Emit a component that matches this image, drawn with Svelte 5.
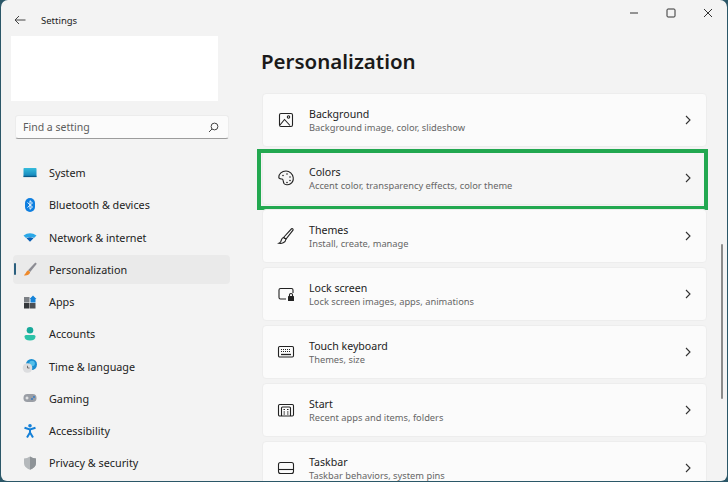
<script>
    const menu = [
        { id: "system", label: "System" },
        { id: "bluetooth", label: "Bluetooth & devices" },
        { id: "network", label: "Network & internet" },
        { id: "brush", label: "Personalization", active: true },
        { id: "apps", label: "Apps" },
        { id: "accounts", label: "Accounts" },
        { id: "time", label: "Time & language" },
        { id: "gaming", label: "Gaming" },
        { id: "access", label: "Accessibility" },
        { id: "privacy", label: "Privacy & security" }
    ];

    const cards = [
        { id: "background", title: "Background", sub: "Background image, color, slideshow" },
        { id: "colors", title: "Colors", sub: "Accent color, transparency effects, color theme", marked: true },
        { id: "themes", title: "Themes", sub: "Install, create, manage" },
        { id: "lock", title: "Lock screen", sub: "Lock screen images, apps, animations" },
        { id: "keyboard", title: "Touch keyboard", sub: "Themes, size" },
        { id: "start", title: "Start", sub: "Recent apps and items, folders" },
        { id: "taskbar", title: "Taskbar", sub: "Taskbar behaviors, system pins" }
    ];
</script>

<div class="ventana">
    <aside class="lateral">
        <div class="titulo">
            <svg class="atras" width="12" height="10" viewBox="0 0 12 10" fill="none" stroke="#444" stroke-width="1">
                <path d="M11.500 5H1M5 1 1 5l4 4" />
            </svg>
            <span>Settings</span>
        </div>
        <div class="perfil"></div>
        <div class="buscador">
            <span>Find a setting</span>
            <svg width="11" height="11" viewBox="0 0 11 11" fill="none" stroke="#444" stroke-width="1">
                <circle cx="6.500" cy="4.500" r="3.400" />
                <path d="M4 7 1 10" />
            </svg>
        </div>
        <nav class="menu">
            {#each menu as item}
                <div class="item" class:activo={item.active}>
                    <svg class="icono" width="16" height="16" viewBox="0 0 16 16">
                        <defs>
                            <linearGradient id="pantalla-{item.id}" x1="0" y1="0" x2="0" y2="1">
                                <stop offset="0" stop-color="#35bcdc" />
                                <stop offset="1" stop-color="#1180b8" />
                            </linearGradient>
                        </defs>
                        {#if item.id === "system"}
                            <rect x="1.500" y="3" width="13" height="9" rx="0.800" fill="url(#pantalla-{item.id})" />
                            <rect x="1.500" y="10.800" width="13" height="1.300" fill="#0b5a88" />
                        {:else if item.id === "bluetooth"}
                            <rect x="3" y="1" width="10" height="14" rx="5" fill="#0f7fe0" />
                            <path d="M5.500 5.500 10.500 10 8 12.300V3.700L10.500 6 5.500 10.500" fill="none" stroke="#fff" stroke-width="0.900" />
                        {:else if item.id === "network"}
                            <path d="M1.500 6.500Q8 2 14.500 6.500L12 9Q8 7 4 9Z" fill="#2aa8e8" />
                            <path d="M4.500 9.200Q8 7.500 11.500 9.200L8 12.800Z" fill="#0a5fb4" />
                        {:else if item.id === "brush"}
                            <path d="M6 9.300 13.300 1.500 14.800 2.800 8.200 11Z" fill="#8d8d94" />
                            <path d="M6 9.300 8.200 11.200C7.500 14 4 15 1.800 14.300 3.600 13.500 3.800 10.500 6 9.300Z" fill="#ee8a2c" />
                        {:else if item.id === "apps"}
                            <rect x="2" y="3" width="5.500" height="5.500" fill="#7c8085" />
                            <rect x="2" y="9" width="5.500" height="5.500" fill="#34373b" />
                            <rect x="8" y="9" width="5.500" height="5.500" fill="#4c5055" />
                            <path d="M11 1.500 14.500 5 13.500 5V8.500H8.500V5H7.500Z" fill="#1583d8" />
                        {:else if item.id === "accounts"}
                            <circle cx="8" cy="4.300" r="3.300" fill="#17a99a" />
                            <path d="M2.500 10.500Q2.500 9 4 9H12Q13.500 9 13.500 10.500 13.500 14.500 8 14.500T2.500 10.500Z" fill="#2cc2a8" />
                        {:else if item.id === "time"}
                            <circle cx="9.500" cy="6.500" r="5.500" fill="#1b8ed0" />
                            <circle cx="10" cy="5.500" r="2.800" fill="#54c0ea" />
                            <circle cx="5.500" cy="10" r="4.800" fill="#dcdddf" />
                            <path d="M5.500 7.800V10H7.500" fill="none" stroke="#555" stroke-width="0.800" />
                        {:else if item.id === "gaming"}
                            <rect x="1.500" y="4" width="13" height="8" rx="3.800" fill="#9a9ea5" />
                            <path d="M3.500 8H6.500M5 6.500V9.500" stroke="#fff" stroke-width="0.900" />
                            <circle cx="10" cy="9" r="0.900" fill="#2a78c8" />
                            <circle cx="12" cy="7" r="0.900" fill="#2a78c8" />
                        {:else if item.id === "access"}
                            <circle cx="8" cy="2.800" r="1.800" fill="#1480d8" />
                            <path d="M2.500 4.700 8 6.500 13.500 4.700M8 6.500V9.500M8 9.500 5 14.500M8 9.500 11 14.500" fill="none" stroke="#1480d8" stroke-width="2" />
                        {:else}
                            <path d="M8 1.500Q11 3.500 14 3.500V8C14 11.500 11 13.700 8 14.700 5 13.700 2 11.500 2 8V3.500Q5 3.500 8 1.500Z" fill="#b4b8bb" />
                            <path d="M8 1.500Q11 3.500 14 3.500V8C14 11.500 11 13.700 8 14.700Z" fill="#8e9397" />
                        {/if}
                    </svg>
                    <span>{item.label}</span>
                </div>
            {/each}
        </nav>
    </aside>

    <main class="contenido">
        <div class="controles">
            <svg width="10" height="10" viewBox="0 0 10 10" fill="none" stroke="#333" stroke-width="1">
                <path d="M1 5H9" />
            </svg>
            <svg width="10" height="10" viewBox="0 0 10 10" fill="none" stroke="#333" stroke-width="1">
                <rect x="1" y="1" width="8" height="8" rx="1" />
            </svg>
            <svg width="10" height="10" viewBox="0 0 10 10" fill="none" stroke="#333" stroke-width="1">
                <path d="M1 1 9 9M9 1 1 9" />
            </svg>
        </div>
        <h1>Personalization</h1>
        <div class="lista">
            {#each cards as card}
                <div class="tarjeta" class:marcada={card.marked}>
                    <svg class="icono-tarjeta" width="18" height="18" viewBox="0 0 18 18" fill="none" stroke="#222" stroke-width="1.100">
                        {#if card.id === "background"}
                            <rect x="2.500" y="2.500" width="13" height="13" rx="1.500" />
                            <circle cx="11.500" cy="6" r="1.200" />
                            <path d="M3 14 7.500 8.500 13 14.500" />
                        {:else if card.id === "colors"}
                            <path d="M9 2C4.800 2 1.800 5 1.800 8.300 1.800 10.200 4 9.800 5.200 10 6.500 10.300 6 12.500 7 14.500 8 16 11.500 16.200 13.500 14.800 15.800 13.200 16.500 10.800 16.200 8.500 15.700 4.800 12.500 2 9 2Z" />
                            <circle cx="6" cy="6.500" r="0.800" fill="#222" stroke="none" />
                            <circle cx="10" cy="5" r="0.800" fill="#222" stroke="none" />
                            <circle cx="13" cy="8" r="0.800" fill="#222" stroke="none" />
                            <circle cx="13" cy="11.500" r="0.800" fill="#222" stroke="none" />
                            <circle cx="10" cy="13.500" r="0.800" fill="#222" stroke="none" />
                        {:else if card.id === "themes"}
                            <path d="M6.500 10.500 14.500 1.800C15.500 1.200 16.500 2 16 3.200L9 12Z" />
                            <path d="M6.500 10.500C4.500 10.800 4.500 13 3.800 14.500 3.300 15.500 2.500 16 1.800 16.300 4.500 16.800 8.500 16 9 12Z" />
                        {:else if card.id === "lock"}
                            <path d="M9 14H3.500Q2 14 2 12.500V5Q2 3.500 3.500 3.500H14.500Q16 3.500 16 5V8" />
                            <rect x="11" y="11" width="6" height="5" rx="0.600" fill="#222" stroke="none" />
                            <path d="M12.500 11V9.800Q12.500 8.500 14 8.500T15.500 9.800V11" />
                        {:else if card.id === "keyboard"}
                            <rect x="1.500" y="3.500" width="15" height="10.500" rx="1.200" />
                            <path d="M4 6.500H14M4 8.500H14" stroke-dasharray="1 1" />
                            <path d="M4 11.500H14" stroke-width="1.300" />
                        {:else if card.id === "start"}
                            <rect x="1.500" y="3.500" width="15" height="11.500" rx="1.200" />
                            <path d="M4.500 15V7Q4.500 6 5.500 6H12.500Q13.500 6 13.500 7V15" />
                            <path d="M6.500 8.500H8M10 8.500H11.500M6.500 11H8M10 11H11.500M6.500 13H8M10 13H11.500" />
                        {:else}
                            <rect x="1.500" y="3.500" width="15" height="11" rx="2" />
                            <path d="M1.500 10.500H16.500" />
                        {/if}
                    </svg>
                    <div class="textos">
                        <div class="nombre">{card.title}</div>
                        <div class="detalle">{card.sub}</div>
                    </div>
                    <svg class="flecha" width="6" height="10" viewBox="0 0 6 10" fill="none" stroke="#333" stroke-width="1.100">
                        <path d="M1 1 5 5 1 9" />
                    </svg>
                </div>
            {/each}
        </div>
        <div class="barra"></div>
    </main>
</div>

<style>
    :global(body) {
        background-color: #2b5768;
    }
    * {
        font-family: "Noto Sans", "Open Sans", Arial, sans-serif;
        box-sizing: border-box;
    }
    .ventana {
        display: flex;
        width: 726px;
        height: 481px;
        margin-left: 1px;
        padding-top: 1px;
        background-color: #f3f3f3;
        border-radius: 7px 7px 6px 6px;
        overflow: hidden;
    }
    .lateral {
        width: 229px;
        flex-shrink: 0;
        padding-left: 10px;
    }
    .titulo {
        display: flex;
        align-items: center;
        height: 35px;
        padding-left: 3px;
        padding-top: 3px;
        color: #222;
        font-size: 9.500px;
    }
    .atras {
        margin-right: 15px;
    }
    .perfil {
        width: 207px;
        height: 65px;
        background-color: #fff;
    }
    .buscador {
        display: flex;
        align-items: center;
        justify-content: space-between;
        width: 214px;
        height: 24px;
        margin: 14px 0 19.500px 4px;
        padding: 0 9px 0 7px;
        background-color: #fbfbfb;
        border-radius: 3px;
        border: 1px solid #ececec;
        border-bottom: 1px solid #9c9c9c;
        color: #5c5c5c;
        font-size: 10.500px;
    }
    .menu {
        display: flex;
        flex-direction: column;
        gap: 4px;
    }
    .item {
        position: relative;
        display: flex;
        align-items: center;
        width: 217px;
        height: 28.250px;
        margin-left: 2px;
        padding-left: 9px;
        border-radius: 4px;
        color: #222;
        font-size: 10.800px;
    }
    .item.activo {
        background-color: #eaeaea;
    }
    .item.activo::before {
        content: "";
        position: absolute;
        left: 1px;
        top: 8px;
        width: 2px;
        height: 12px;
        border-radius: 1px;
        background-color: #2b5f7e;
    }
    .icono {
        flex-shrink: 0;
        margin-right: 11px;
    }
    .contenido {
        position: relative;
        flex: 1;
        min-width: 0;
        padding-left: 32px;
    }
    .controles {
        position: absolute;
        top: 7px;
        right: 14px;
        display: flex;
        gap: 27px;
    }
    h1 {
        margin: 0;
        height: 92px;
        margin-left: -1px;
        padding-top: 43px;
        color: #1a1a1a;
        font-size: 20.500px;
        font-weight: 600;
        line-height: 34px;
    }
    .lista {
        display: flex;
        flex-direction: column;
        gap: 4px;
    }
    .tarjeta {
        position: relative;
        display: flex;
        align-items: center;
        flex-shrink: 0;
        width: 445px;
        height: 54px;
        padding: 0 15px 0 14px;
        background-color: #fbfbfb;
        border: 1px solid #ededed;
        border-radius: 4px;
    }
    .tarjeta.marcada {
        background-color: #f6f6f6;
    }
    .tarjeta.marcada::after {
        content: "";
        position: absolute;
        top: -3px;
        left: -6px;
        right: -2px;
        bottom: -6px;
        border: 4px solid #22a850;
    }
    .icono-tarjeta {
        flex-shrink: 0;
        margin-right: 14px;
    }
    .textos {
        flex: 1;
    }
    .nombre {
        color: #222;
        font-size: 10.600px;
        line-height: 14px;
    }
    .detalle {
        color: #666;
        font-size: 9.300px;
        line-height: 13px;
    }
    .barra {
        position: absolute;
        top: 243px;
        right: 4px;
        width: 2px;
        height: 155px;
        border-radius: 1px;
        background-color: #8b8b8b;
    }
</style>
